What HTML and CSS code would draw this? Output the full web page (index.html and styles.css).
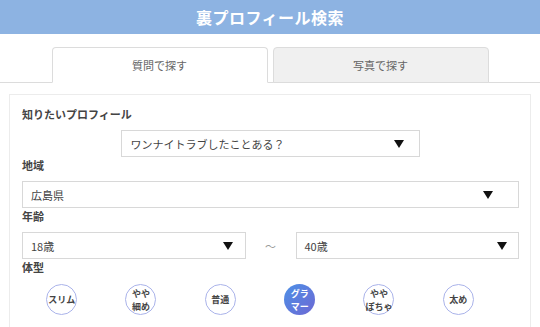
FILE: index.html
```html
<!DOCTYPE html>
<html lang="ja">
<head>
<meta charset="utf-8">
<link rel="stylesheet" href="styles.css">
</head>
<body>
<header class="header">裏プロフィール検索</header>
<nav class="tabs">
  <div class="tab tab-active">質問で探す</div>
  <div class="tab">写真で探す</div>
</nav>
<section class="panel">
  <div class="label">知りたいプロフィール</div>
  <div class="select select-center">
    <span>ワンナイトラブしたことある？</span><i class="arrow"></i>
  </div>
  <div class="label">地域</div>
  <div class="select">
    <span>広島県</span><i class="arrow"></i>
  </div>
  <div class="label">年齢</div>
  <div class="age-row">
    <div class="select"><span>18歳</span><i class="arrow"></i></div>
    <div class="tilde">～</div>
    <div class="select"><span>40歳</span><i class="arrow"></i></div>
  </div>
  <div class="label">体型</div>
  <ul class="body-types">
    <li><span class="circle">スリム</span></li>
    <li><span class="circle">やや<br>細め</span></li>
    <li><span class="circle">普通</span></li>
    <li><span class="circle circle-active">グラ<br>マー</span></li>
    <li><span class="circle">やや<br>ぽちゃ</span></li>
    <li><span class="circle">太め</span></li>
  </ul>
</section>
</body>
</html>
```
FILE: styles.css
```css
* { box-sizing: border-box; }
body {
  margin: 0;
  font-family: "Noto Sans CJK JP", "Noto Sans", sans-serif;
  color: #444;
  background: #fff;
  overflow: hidden;
}
.header {
  height: 34px;
  line-height: 34px;
  background: #8db3e2;
  color: #fff;
  text-align: center;
  font-size: 16px;
  font-weight: bold;
  letter-spacing: 0.5px;
}
.tabs {
  display: flex;
  justify-content: center;
  gap: 5px;
  margin-top: 13px;
  border-bottom: 1px solid #dcdcdc;
}
.tab {
  width: 216px;
  height: 36px;
  margin-bottom: -1px;
  border: 1px solid #dcdcdc;
  border-radius: 4px 4px 0 0;
  background: #f0f0f0;
  display: flex;
  align-items: center;
  justify-content: center;
  font-size: 11px;
  color: #666;
}
.tab-active {
  background: #fff;
  border-bottom-color: #fff;
}
.panel {
  margin: 11px 9px 0;
  border: 1px solid #ececec;
  padding: 11px 11px 20px 12px;
}
.label {
  font-size: 11px;
  font-weight: bold;
  line-height: 16px;
  color: #444;
}
.select {
  position: relative;
  height: 27px;
  border: 1px solid #d8d8d8;
  display: flex;
  align-items: center;
  padding-left: 8px;
  font-size: 11px;
  color: #444;
  margin: 7px 0 0;
}
.label + .select, .label + .age-row { margin-top: 8px; }
.select-center {
  width: 60%;
  margin-left: auto;
  margin-right: auto;
}
.arrow {
  position: absolute;
  right: 5%;
  top: 50%;
  margin-top: -4px;
  width: 0;
  height: 0;
  border-left: 5px solid transparent;
  border-right: 5px solid transparent;
  border-top: 8px solid #111;
}
.age-row {
  display: grid;
  grid-template-columns: 1fr 50px 1fr;
  align-items: center;
}
.age-row .select { margin: 0; }
.tilde {
  text-align: center;
  font-size: 11px;
  color: #999;
}
.body-types {
  list-style: none;
  margin: 9px 21px 0 0;
  padding: 0;
  display: grid;
  grid-template-columns: repeat(6, 1fr);
}
.body-types li {
  display: flex;
  justify-content: center;
}
.circle {
  width: 31px;
  height: 31px;
  border-radius: 50%;
  border: 1px solid #aab3ea;
  background: #fff;
  display: flex;
  align-items: center;
  justify-content: center;
  text-align: center;
  font-size: 9px;
  line-height: 13px;
  font-weight: bold;
  color: #444;
  white-space: nowrap;
}
.circle-active {
  border: none;
  background: linear-gradient(135deg, #4d90e6, #6d68d4);
  color: #fff;
}
```
